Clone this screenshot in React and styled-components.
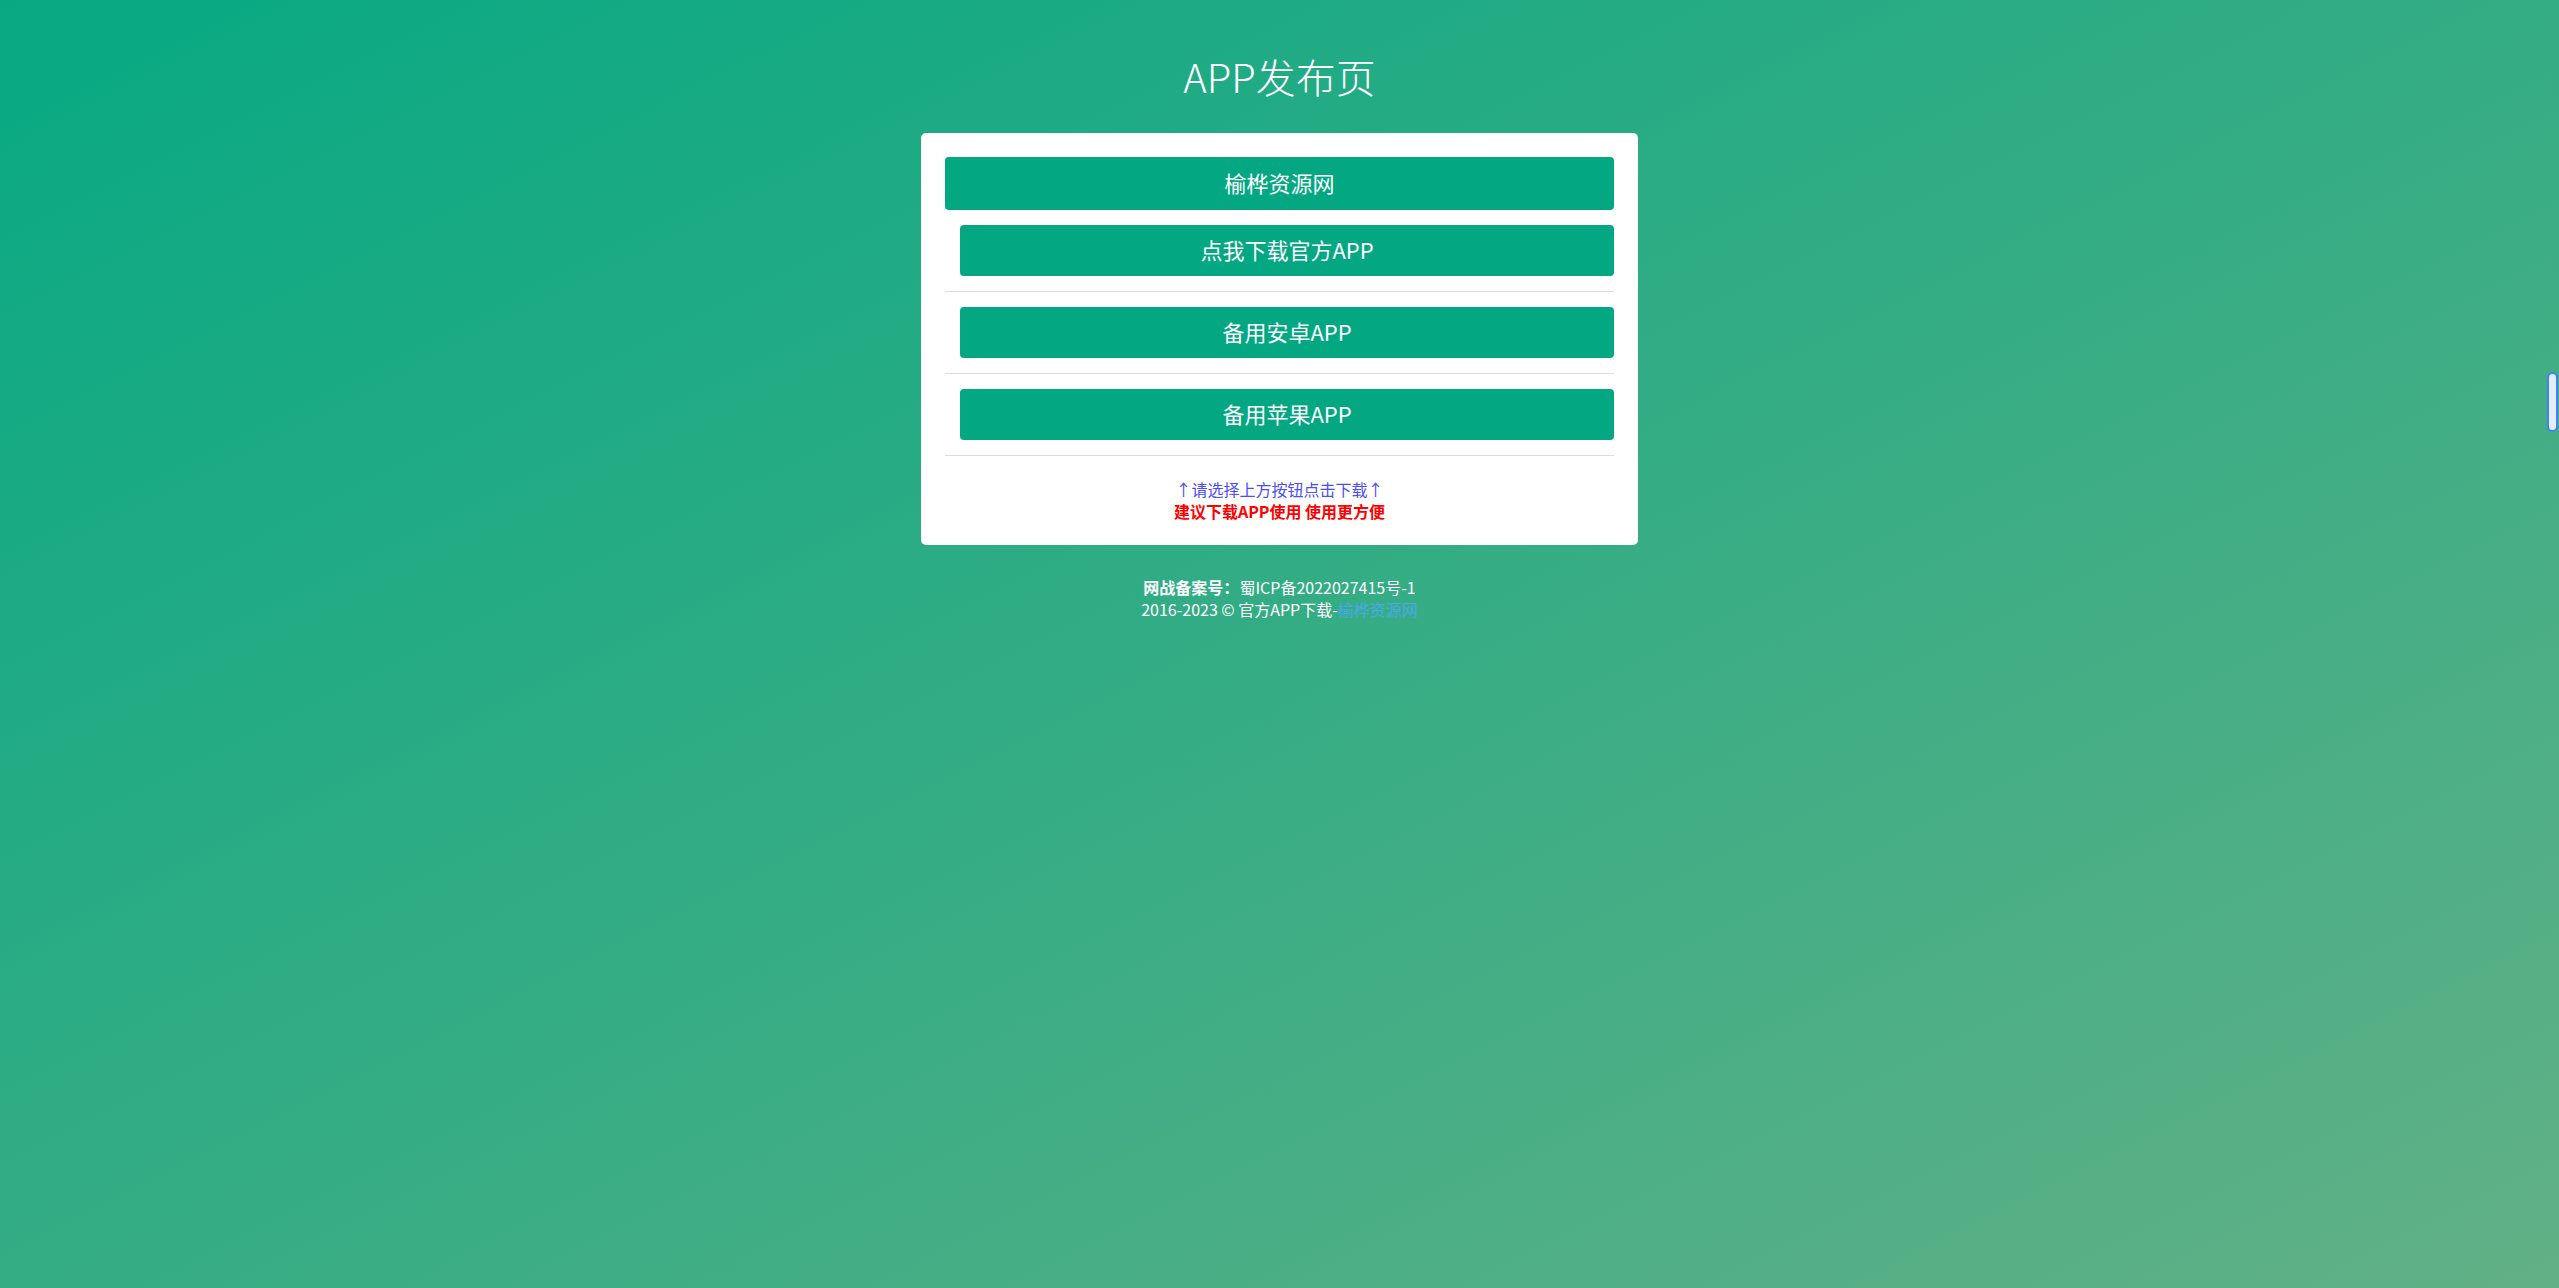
import React from "react";
import styled, { createGlobalStyle } from "styled-components";

const GlobalStyle = createGlobalStyle`
	html, body {
		margin: 0;
		padding: 0;
		min-height: 100%;
	}

	body {
		font-family: "Noto Sans CJK SC", "Noto Sans", sans-serif;
		color: #ffffff;
		background: linear-gradient(to bottom right, #07a983, #62b086);
		background-attachment: fixed;
		min-height: 1288px;
	}
`;

const Page = styled.div`
	display: flex;
	flex-direction: column;
	align-items: center;
	padding-top: 52px;
`;

const Title = styled.h1`
	margin: 0 0 33px;
	font-size: 40px;
	line-height: 48px;
	font-weight: 300;
	color: #ffffff;
`;

const Card = styled.div`
	box-sizing: border-box;
	width: 717px;
	padding: 24px 24px 23px;
	background-color: #ffffff;
	border-radius: 5px;
`;

const Button = styled.a`
	box-sizing: border-box;
	display: flex;
	align-items: center;
	justify-content: center;
	height: ${(props) => props.height}px;
	padding-bottom: 3px;
	background-color: #03a882;
	border-radius: 4px;
	color: #ffffff;
	font-size: 22px;
	font-weight: 400;
	text-decoration: none;
	cursor: pointer;
`;

const List = styled.ul`
	margin: 0;
	padding: 0;
	list-style: none;
`;

const Item = styled.li`
	padding: 15px 0 15px 15px;
	border-bottom: 1px solid #dddddd;
`;

const Notes = styled.div`
	margin-top: 22px;
	text-align: center;
	font-size: 16px;
	line-height: 22px;
`;

const Hint = styled.div`
	color: #4c4cff;
`;

const Advice = styled.div`
	color: #ff0000;
	font-weight: 700;
`;

const Footer = styled.footer`
	margin-top: 31px;
	text-align: center;
	font-size: 16px;
	line-height: 22px;
	color: #ffffff;
`;

const Label = styled.b`
	font-weight: 700;
`;

const Link = styled.a`
	color: #4aa8e8;
	text-decoration: none;
`;

const ScrollThumb = styled.div`
	position: fixed;
	top: 372px;
	right: 1px;
	box-sizing: border-box;
	width: 11px;
	height: 60px;
	background-color: #e6ecff;
	border: 2px solid #3d84f5;
	border-radius: 6px;
`;

const downloads = ["点我下载官方APP", "备用安卓APP", "备用苹果APP"];

const App = () => (
	<>
		<GlobalStyle />
		<Page>
			<Title>APP发布页</Title>

			<Card>
				<Button height={53}>榆桦资源网</Button>

				<List>
					{downloads.map((name) => (
						<Item key={name}>
							<Button height={51}>{name}</Button>
						</Item>
					))}
				</List>

				<Notes>
					<Hint>↑请选择上方按钮点击下载↑</Hint>
					<Advice>建议下载APP使用 使用更方便</Advice>
				</Notes>
			</Card>

			<Footer>
				<div>
					<Label>网战备案号：</Label>蜀ICP备2022027415号-1
				</div>
				<div>
					2016-2023 © 官方APP下载-<Link>榆桦资源网</Link>
				</div>
			</Footer>
		</Page>
		<ScrollThumb />
	</>
);

export default App;
